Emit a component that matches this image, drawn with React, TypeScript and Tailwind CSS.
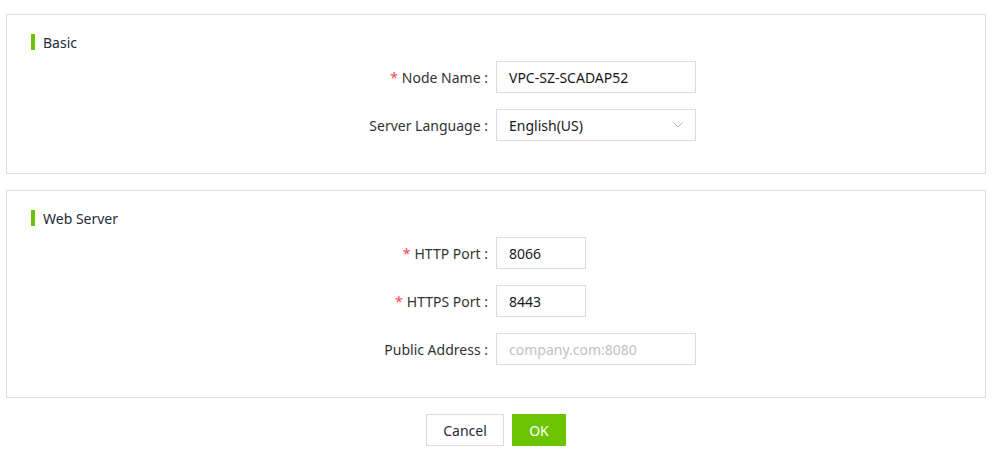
import React from 'react';

const font = { fontFamily: '"Noto Sans", "Open Sans", sans-serif' };

const Section: React.FC<{ title: string; children: React.ReactNode }> = ({ title, children }) => (
  <div className="border border-[#dfdfdf] bg-white pt-[19px] pb-[32px] pl-[24px]">
    <div className="flex items-center h-[16px]">
      <span className="w-[4px] h-[16px] bg-[#6cc400]" />
      <span className="ml-[8px] mt-[2px] text-[14px] text-[#252b3a] leading-none">{title}</span>
    </div>
    <div className="mt-[11px] flex flex-col gap-[16px]">{children}</div>
  </div>
);

const Row: React.FC<{ label: string; required?: boolean; children: React.ReactNode }> = ({
  label,
  required,
  children,
}) => (
  <div className="flex items-center h-[32px]">
    <div className="w-[465px] pr-[8px] text-right text-[14px] text-[#333]">
      {required && <span className="text-[#f5455a] mr-[4px]">*</span>}
      {label} :
    </div>
    {children}
  </div>
);

const Field: React.FC<{ value?: string; placeholder?: string; width: string }> = ({
  value,
  placeholder,
  width,
}) => (
  <div className={`${width} h-[32px] border border-[#dcdcdc] flex items-center px-[12px] text-[14px]`}>
    {value ? (
      <span className="text-[#191919]">{value}</span>
    ) : (
      <span className="text-[#c2c2c2]">{placeholder}</span>
    )}
  </div>
);

export default function App() {
  return (
    <div className="bg-white w-[996px] h-[453px] pt-[14px] pl-[6px] pr-[10px]" style={font}>
      <Section title="Basic">
        <Row label="Node Name" required>
          <Field value="VPC-SZ-SCADAP52" width="w-[200px]" />
        </Row>
        <Row label="Server Language">
          <div className="w-[200px] h-[32px] border border-[#dcdcdc] flex items-center justify-between px-[12px] text-[14px]">
            <span className="text-[#191919]">English(US)</span>
            <svg width="10" height="6" viewBox="0 0 10 6" fill="none">
              <path d="M0.5 0.5 L5 5 L9.5 0.5" stroke="#b4b4b4" strokeWidth="1" />
            </svg>
          </div>
        </Row>
      </Section>

      <div className="mt-[16px]">
        <Section title="Web Server">
          <Row label="HTTP Port" required>
            <Field value="8066" width="w-[90px]" />
          </Row>
          <Row label="HTTPS Port" required>
            <Field value="8443" width="w-[90px]" />
          </Row>
          <Row label="Public Address">
            <Field placeholder="company.com:8080" width="w-[200px]" />
          </Row>
        </Section>
      </div>

      <div className="mt-[16px] flex justify-center gap-[8px]">
        <button className="w-[78px] h-[32px] border border-[#dcdcdc] bg-white text-[14px] text-[#252b3a]">
          Cancel
        </button>
        <button className="w-[54px] h-[32px] bg-[#6cc400] text-[14px] text-white">OK</button>
      </div>
    </div>
  );
}
